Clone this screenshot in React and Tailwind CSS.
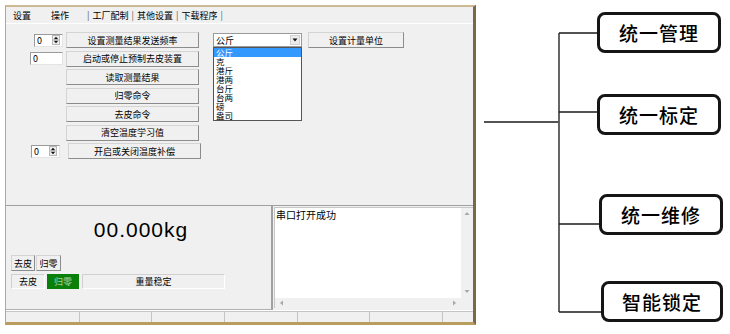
import React from 'react';

const Btn = ({ children, className = '' }) => (
  <div
    className={`flex h-[16px] items-center justify-center border border-[#d4d4d4] border-r-[#8c8c8c] border-b-[#8c8c8c] bg-[#f0f0f0] text-[9px] leading-none text-black ${className}`}
  >
    {children}
  </div>
);

const SpinArrows = () => (
  <svg width="8" height="10" viewBox="0 0 8 10">
    <rect x="0.5" y="0.5" width="7" height="9" fill="#ececec" stroke="#b8b8b8" />
    <path d="M4 1.8 L6 4 H2 Z M2 6 H6 L4 8.2 Z" fill="#111" />
    <line x1="1.5" y1="5" x2="6.5" y2="5" stroke="#777" />
  </svg>
);

const Spin = ({ w = 'w-[29px]' }) => (
  <div className={`flex h-[13px] ${w} items-center border border-[#9a9a9a] border-r-[#e4e4e4] border-b-[#e4e4e4] bg-white pl-[2px] pr-[2px] text-[9px] leading-none`}>
    <span className="flex-1">0</span>
    <SpinArrows />
  </div>
);

const Tri = ({ dir }) => {
  const d = {
    up: 'M3 1 L5.5 4 H0.5 Z',
    down: 'M0.5 1 H5.5 L3 4 Z',
    left: 'M4 0.5 V5.5 L1 3 Z',
    right: 'M2 0.5 V5.5 L5 3 Z',
  }[dir];
  return (
    <svg width="6" height="6" viewBox="0 0 6 6">
      <path d={d} fill="#a8a8a8" />
    </svg>
  );
};

const rows = [
  { label: '设置测量结果发送频率', left: 'spin' },
  { label: '启动或停止预制去皮装置', left: 'input' },
  { label: '读取测量结果' },
  { label: '归零命令' },
  { label: '去皮命令' },
  { label: '清空温度学习值' },
];

const units = ['公斤', '克', '港斤', '港两', '台斤', '台两', '磅', '盎司'];

const Window = () => (
  <div className="ml-[5px] mt-[5px] flex h-[320px] w-[471px] flex-col border-l border-t-2 border-r-[3px] border-b-[3px] border-l-[#a8a8a8] border-t-[#cdb994] border-r-[#7a6848] border-b-[#b99d5e] bg-[#f0f0f0] font-['Noto_Sans_CJK_SC',sans-serif] text-black">
    {/* Tabs */}
    <div className="flex h-[17px] items-center border-b border-b-white text-[9px] leading-none">
      <span className="ml-[7px]">设置</span>
      <span className="ml-[20px]">操作</span>
      <span className="ml-[18px] text-[#555]">|</span>
      <span className="ml-[3px]">工厂配制</span>
      <span className="ml-[3px] text-[#555]">|</span>
      <span className="ml-[3px]">其他设置</span>
      <span className="ml-[3px] text-[#555]">|</span>
      <span className="ml-[3px]">下载程序</span>
      <span className="ml-[3px] text-[#555]">|</span>
    </div>

    {/* Upper panel */}
    <div className="flex h-[181px] pt-[8px]">
      <div className="flex w-[195px] flex-col gap-[2.5px]">
        {rows.map((r) => (
          <div key={r.label} className="flex h-[16px] items-center">
            <div className="flex w-[60px] justify-end pr-[3px]">
              {r.left === 'spin' && <Spin w="w-[29px]" />}
              {r.left === 'input' && (
                <div className="flex h-[13px] w-[33px] items-center border border-[#9a9a9a] border-r-[#e4e4e4] border-b-[#e4e4e4] bg-white pl-[2px] text-[9px] leading-none">
                  0
                </div>
              )}
            </div>
            <Btn className="w-[133px]">{r.label}</Btn>
          </div>
        ))}
        <div className="flex h-[16px] items-center">
          <div className="flex w-[62px] justify-end pr-[8px]">
            <Spin w="w-[29px]" />
          </div>
          <Btn className="w-[133px]">开启或关闭温度补偿</Btn>
        </div>
      </div>

      {/* Unit select */}
      <div className="ml-[12px] mt-[1px] flex w-[89px] flex-col">
        <div className="flex h-[14px] items-center border border-[#9a9a9a] bg-white pl-[2px] text-[9px] leading-none">
          <span className="flex-1">公斤</span>
          <div className="mr-[1px] flex h-[10px] w-[10px] items-center justify-center border border-[#d0d0d0] bg-[#ececec]">
            <svg width="6" height="4" viewBox="0 0 6 4">
              <path d="M0.5 0.5 H5.5 L3 3.5 Z" fill="#111" />
            </svg>
          </div>
        </div>
        <div className="flex flex-col border border-[#555] bg-white text-[8.5px] leading-[9px]">
          {units.map((u, i) => (
            <div
              key={u}
              className={`h-[9px] pl-[2px] ${i === 0 ? 'bg-[#3399ff] text-white' : 'text-black'}`}
            >
              {u}
            </div>
          ))}
        </div>
      </div>

      <Btn className="ml-[6px] w-[96px]">设置计量单位</Btn>
    </div>

    {/* Lower panel */}
    <div className="flex h-[105px] border-t border-t-[#a0a0a0]">
      <div className="flex w-[267px] flex-col border-r-2 border-b border-r-[#a0a0a0] border-b-[#b0b0b0] pl-[5px]">
        <div className="mt-[12px] h-[24px] text-center font-['Liberation_Sans',Arial,sans-serif] text-[21px] leading-[24px] tracking-[1px]">
          00.000kg
        </div>
        <div className="mt-[13px] flex gap-[1px]">
          <Btn className="h-[16px] w-[24px]">去皮</Btn>
          <Btn className="h-[16px] w-[25px]">归零</Btn>
        </div>
        <div className="mt-[3px] flex h-[15px] gap-[2px] text-[9px] leading-none">
          <div className="flex w-[34px] items-center justify-center border border-[#d0d0d0] border-r-white border-b-white">
            去皮
          </div>
          <div className="flex w-[32px] items-center justify-center bg-[#0a7f0a] text-[#a9cfa9]">
            归零
          </div>
          <div className="ml-[1px] flex w-[143px] items-center justify-center border border-[#d0d0d0] border-r-white border-b-white">
            重量稳定
          </div>
        </div>
      </div>

      <div className="flex flex-1 flex-col pt-[1px] pl-[1px] pb-[2px]">
        <div className="flex flex-1 flex-col border-l border-t border-[#c8c8c8]">
          <div className="flex flex-1">
            <div className="flex-1 bg-white pl-[1px] pt-[1px] text-[10px] leading-[12px]">串口打开成功</div>
            <div className="flex w-[12px] flex-col items-center justify-between bg-[#f0f0f0] py-[3px]">
              <Tri dir="up" />
              <Tri dir="down" />
            </div>
          </div>
          <div className="flex h-[10px]">
            <div className="flex flex-1 items-center justify-between bg-[#f0f0f0] px-[4px]">
              <Tri dir="left" />
              <Tri dir="right" />
            </div>
            <div className="w-[12px] bg-[#f0f0f0]" />
          </div>
        </div>
      </div>
    </div>

    {/* Status bar */}
    <div className="flex h-[12px] border-t border-t-white">
      {[74, 72, 73, 73, 72, 73].map((w, i) => (
        <div
          key={i}
          style={{ width: w }}
          className="h-full border-r border-t border-r-[#c4c4c4] border-t-[#c4c4c4]"
        />
      ))}
      <div className="flex-1 border-t border-t-[#c4c4c4]" />
    </div>
  </div>
);

const Node = ({ label, className = '' }) => (
  <div
    className={`flex h-[41px] items-center justify-center rounded-[8px] border-[3px] border-[#151515] bg-white text-[19px] font-medium leading-none tracking-[1px] text-black ${className}`}
  >
    {label}
  </div>
);

const Diagram = () => (
  <div className="relative flex-1 font-['Noto_Sans_CJK_SC',sans-serif]">
    <svg className="absolute inset-0" width="254" height="334" viewBox="0 0 254 334">
      <g stroke="#1a1a1a" strokeWidth="1.4" fill="none">
        <line x1="8" y1="122" x2="83" y2="122" />
        <line x1="83" y1="33" x2="83" y2="312" stroke="#555" strokeWidth="1.8" />
        <line x1="83" y1="33" x2="122" y2="33" />
        <line x1="83" y1="112" x2="122" y2="112" />
        <line x1="83" y1="224" x2="124" y2="224" />
        <line x1="83" y1="312" x2="126" y2="312" />
      </g>
    </svg>
    <div className="relative flex flex-col">
      <Node label="统一管理" className="ml-[121px] mt-[12px] w-[124px]" />
      <Node label="统一标定" className="ml-[121px] mt-[41px] w-[124px]" />
      <Node label="统一维修" className="ml-[123px] mt-[59px] w-[124px]" />
      <Node label="智能锁定" className="ml-[125px] mt-[46px] w-[122px]" />
    </div>
  </div>
);

export default function App() {
  return (
    <div className="flex h-[334px] w-[730px] overflow-hidden bg-white">
      <Window />
      <Diagram />
    </div>
  );
}
